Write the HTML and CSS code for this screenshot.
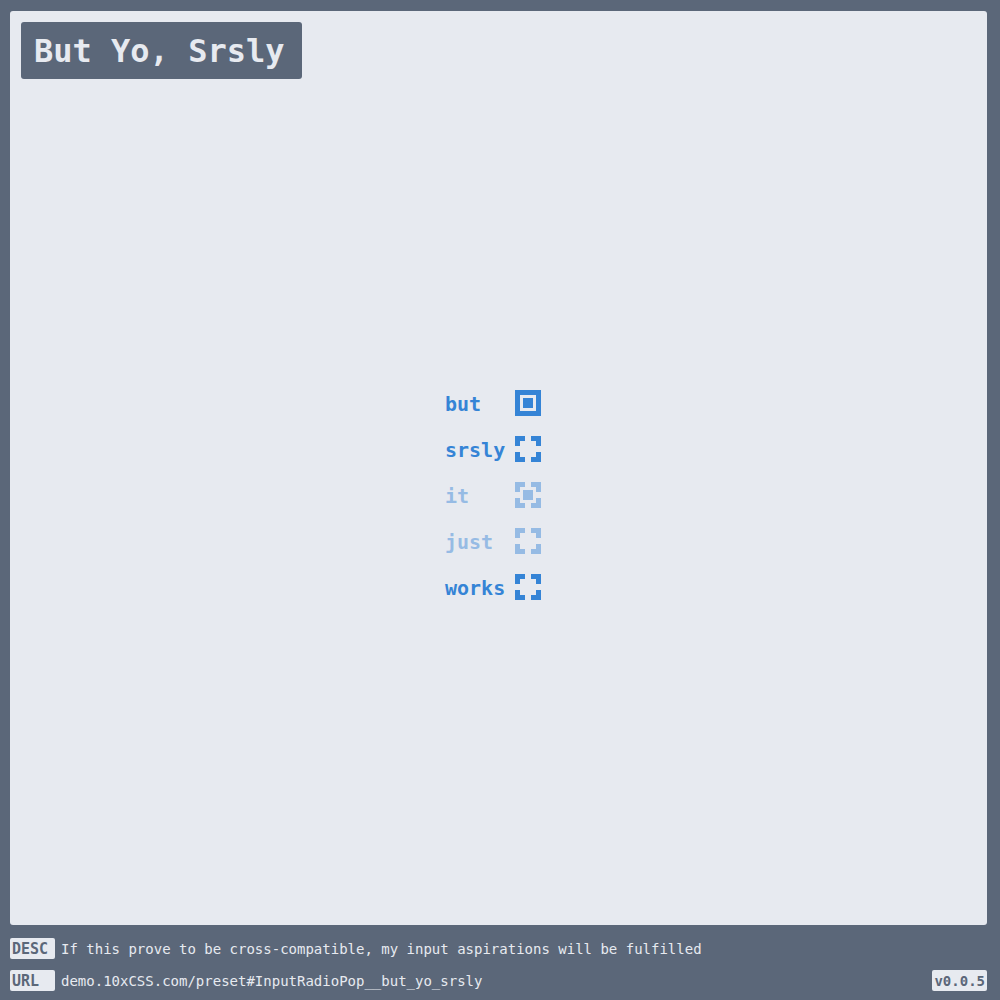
FILE: index.html
```html
<!DOCTYPE html>
<html>
<head>
<meta charset="utf-8">
<link rel="stylesheet" href="styles.css">
</head>
<body>
<div class="page">
  <main class="panel">
    <h1 class="title">But Yo, Srsly</h1>
    <div class="stage">
      <div class="radios">
        <div class="row"><span class="label">but</span><span class="radio checked"><span class="dot"></span></span></div>
        <div class="row"><span class="label">srsly</span><span class="radio"><i class="c tl"></i><i class="c tr"></i><i class="c bl"></i><i class="c br"></i></span></div>
        <div class="row faded"><span class="label">it</span><span class="radio"><i class="c tl"></i><i class="c tr"></i><i class="c bl"></i><i class="c br"></i><span class="dot"></span></span></div>
        <div class="row faded"><span class="label">just</span><span class="radio"><i class="c tl"></i><i class="c tr"></i><i class="c bl"></i><i class="c br"></i></span></div>
        <div class="row"><span class="label">works</span><span class="radio"><i class="c tl"></i><i class="c tr"></i><i class="c bl"></i><i class="c br"></i></span></div>
      </div>
    </div>
  </main>
  <footer class="footer">
    <div class="frow"><span class="badge">DESC</span><span class="ftext">If this prove to be cross-compatible, my input aspirations will be fulfilled</span></div>
    <div class="frow"><span class="badge">URL</span><span class="ftext">demo.10xCSS.com/preset#InputRadioPop__but_yo_srsly</span><span class="version">v0.0.5</span></div>
  </footer>
</div>
</body>
</html>
```

FILE: styles.css
```css
html, body {
  margin: 0;
  padding: 0;
  background: #5b6779;
  font-family: "DejaVu Sans Mono", "Liberation Mono", monospace;
}
.page {
  width: 1000px;
  height: 1000px;
  box-sizing: border-box;
  padding: 11px 13px 0 10px;
  display: flex;
  flex-direction: column;
}
.panel {
  height: 914px;
  background: #e7eaf0;
  border-radius: 3px;
  box-sizing: border-box;
  padding: 11px;
  display: flex;
  flex-direction: column;
}
.title {
  margin: 0;
  align-self: flex-start;
  width: 281px;
  height: 57px;
  box-sizing: border-box;
  padding: 2px 0 0 13px;
  background: #5b6779;
  color: #e7eaf0;
  border-radius: 3px;
  font-size: 32px;
  font-weight: 600;
  line-height: 55px;
  white-space: nowrap;
}
.stage {
  padding-top: 311px;
  padding-right: 11px;
  display: flex;
  justify-content: center;
}
.radios {
  display: flex;
  flex-direction: column;
  gap: 20px;
}
.row {
  display: flex;
  align-items: center;
  gap: 10px;
  height: 26px;
  color: #3584d6;
}
.row.faded {
  opacity: 0.45;
}
.label {
  width: 60px;
  font-size: 20px;
  font-weight: bold;
  line-height: 26px;
  padding-top: 2px;
}
.radio {
  position: relative;
  width: 26px;
  height: 26px;
  box-sizing: border-box;
}
.radio.checked {
  border: 5px solid #3584d6;
}
.dot {
  position: absolute;
  left: 8px;
  top: 8px;
  width: 10px;
  height: 10px;
  background: #3584d6;
}
.radio.checked .dot {
  left: 3px;
  top: 3px;
}
.c {
  position: absolute;
  width: 10px;
  height: 10px;
  box-sizing: border-box;
  border: 0 solid #3584d6;
}
.tl { left: 0; top: 0; border-left-width: 5px; border-top-width: 5px; }
.tr { right: 0; top: 0; border-right-width: 5px; border-top-width: 5px; }
.bl { left: 0; bottom: 0; border-left-width: 5px; border-bottom-width: 5px; }
.br { right: 0; bottom: 0; border-right-width: 5px; border-bottom-width: 5px; }
.footer {
  padding-top: 13px;
  display: flex;
  flex-direction: column;
  gap: 11px;
}
.frow {
  display: flex;
  align-items: center;
  height: 21px;
  font-size: 14px;
}
.badge {
  width: 45px;
  height: 21px;
  box-sizing: border-box;
  padding: 2px 0 0 2px;
  background: #e7eaf0;
  color: #5b6779;
  font-weight: bold;
  font-size: 15px;
  line-height: 19px;
  border-radius: 2px;
}
.ftext {
  margin-left: 6px;
  color: #e7eaf0;
  flex: 1;
  padding-top: 2px;
  line-height: 19px;
}
.version {
  height: 21px;
  box-sizing: border-box;
  padding: 2px 2px 0;
  background: #e7eaf0;
  color: #5b6779;
  font-weight: bold;
  line-height: 19px;
  border-radius: 2px;
}
```
